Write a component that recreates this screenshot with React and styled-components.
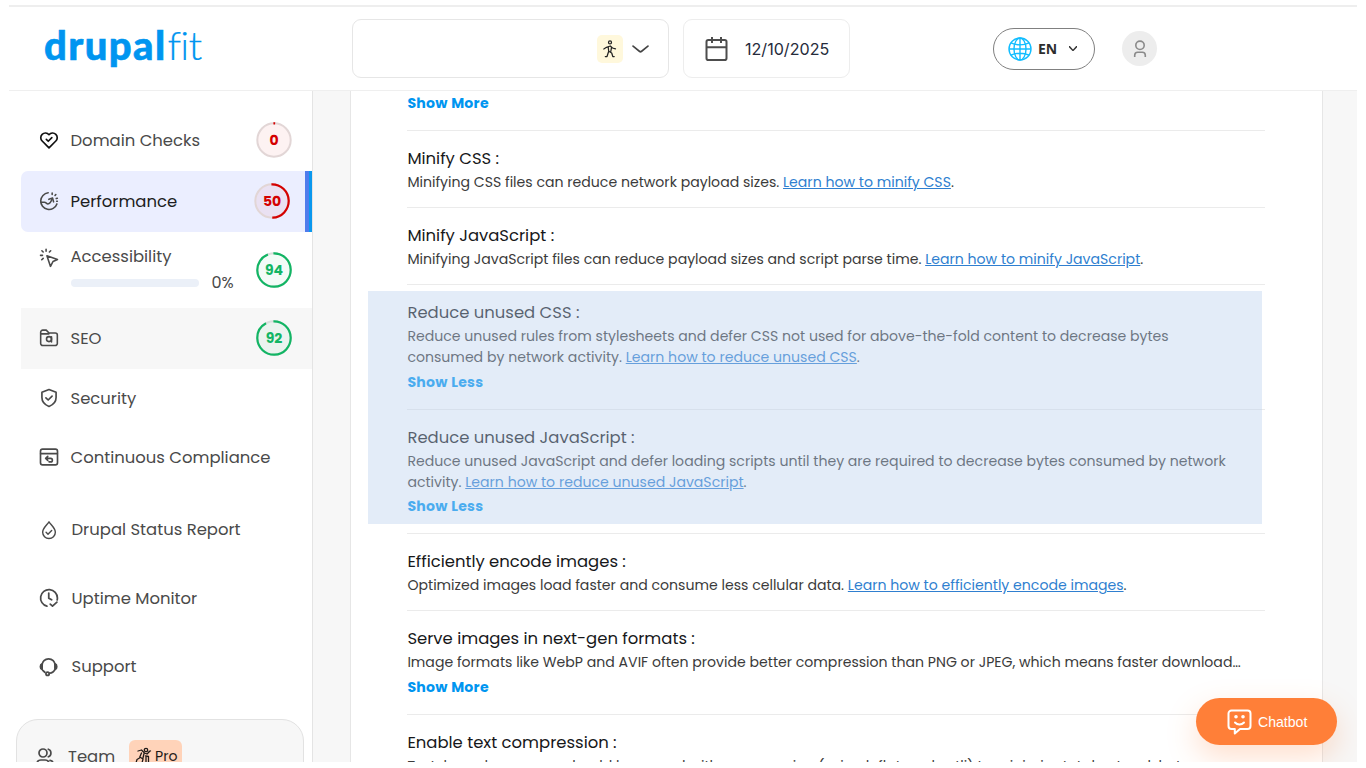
import React from "react";
import styled, { createGlobalStyle } from "styled-components";

const GlobalStyle = createGlobalStyle`
	* {
		box-sizing: border-box;
	}

	body {
		margin: 0;
		background-color: #ffffff;
		font-family: Poppins, Inter, "Open Sans", sans-serif;
	}
`;

const themeColor = {
	brand: "#0095f0",
	link: "#2f7fd0",
	text: "#4a4a4a",
	dark: "#17181a",
	line: "#ebebeb",
	muted: "#f7f7f7",
	red: "#d40000",
	green: "#12b564",
	orange: "#ff7f38",
};

const Page = styled.div`
	width: 1348px;
	height: 757px;
	margin: 5px 9px 6px;
	display: flex;
	flex-direction: column;
	overflow: hidden;
	border-top: 2px solid #eeeeee;
	position: relative;
`;

const Header = styled.header`
	height: 84px;
	flex: none;
	display: flex;
	align-items: center;
	border-bottom: 1px solid #efefef;
`;

const Logo = styled.div`
	width: 308px;
	margin-left: 35px;
	padding-bottom: 7px;
	font-family: Lato, sans-serif;
	font-size: 40px;
	line-height: 48px;
	font-weight: 900;
	letter-spacing: 1.4px;
	color: ${themeColor.brand};
	-webkit-text-stroke: 0.6px ${themeColor.brand};
	white-space: nowrap;

	span {
		font-weight: 300;
		letter-spacing: -0.8px;
		margin-left: 1px;
		-webkit-text-stroke: 0.2px ${themeColor.brand};
	}
`;

const Field = styled.div`
	width: ${({ width }) => width}px;
	height: 59px;
	border: 1px solid #e6e6e6;
	border-radius: 9px;
	display: flex;
	align-items: center;
`;

const SiteField = styled(Field)`
	justify-content: flex-end;
	padding-right: 19px;
	gap: 9px;
`;

const DateField = styled(Field)`
	margin-left: 14px;
	padding-left: 21px;
	gap: 17px;
	font-family: Inter, sans-serif;
	font-size: 16.1px;
	color: #262b3b;
	border-color: #ededed;
`;

const WalkBadge = styled.div`
	width: 26px;
	height: 28px;
	border-radius: 5px;
	background-color: #fff8dc;
	display: flex;
	align-items: center;
	justify-content: center;
`;

const Language = styled.button`
	width: 102px;
	height: 42px;
	margin-left: 143px;
	padding: 0 0 0 14px;
	border: 1px solid #808080;
	border-radius: 21px;
	background: none;
	display: flex;
	align-items: center;
	font-family: "Open Sans", sans-serif;
	font-size: 14px;
	font-weight: 700;
	color: #2d2d2d;

	span {
		width: 31px;
		margin-left: 6px;
		text-align: left;
	}
`;

const Avatar = styled.div`
	width: 35px;
	height: 35px;
	margin-left: 27px;
	border-radius: 50%;
	background-color: #ededed;
	display: flex;
	align-items: center;
	justify-content: center;
`;

const Body = styled.div`
	flex: 1;
	min-height: 0;
	display: flex;
`;

const Sidebar = styled.nav`
	width: 304px;
	flex: none;
	padding-top: 19px;
	border-right: 1px solid #e4e4e4;
	overflow: hidden;
	display: flex;
	flex-direction: column;
`;

const MenuItem = styled.div`
	height: ${({ height }) => height}px;
	flex: none;
	margin-left: 12px;
	padding: 0 20px 0 19px;
	display: flex;
	align-items: center;
	background-color: ${({ $state }) => $state === "hover" ? "#f7f7f7" : "transparent"};

	${({ $state }) => $state === "active" && `
		background-color: #ebeeff;
		border-radius: 7px 0 0 7px;
		padding-right: 0;
	`}

	> svg {
		margin-bottom: 1px;
	}
`;

const MenuIcon = styled.div`
	width: 18px;
	height: 20px;
	margin-right: ${({ $wide }) => $wide ? 13.5 : 12.5}px;
	margin-bottom: ${({ $raised }) => $raised ? 24 : 1}px;
	display: flex;
	align-items: center;
	justify-content: center;
	color: ${({ $dark }) => $dark ? "#111111" : themeColor.text};

	svg {
		flex: none;
	}
`;

const MenuLabel = styled.div`
	flex: 1;
	font-size: 16.45px;
	line-height: 24px;
	white-space: nowrap;
	color: ${({ $active }) => $active ? "#1d1d22" : themeColor.text};
`;

const ActiveBar = styled.div`
	width: 7px;
	height: 61px;
	margin-left: 15px;
	background-color: #4f7cec;
	border-right: 3px solid #0a98ee;
`;

const AccessBlock = styled.div`
	flex: 1;
	height: 52px;
	padding: 1px 0;
	display: flex;
	flex-direction: column;
	justify-content: space-between;
`;

const ProgressLine = styled.div`
	display: flex;
	align-items: center;
	gap: 13px;
	font-size: 16px;
	line-height: 24px;
	color: ${themeColor.text};
`;

const Track = styled.div`
	width: 128px;
	height: 8px;
	border-radius: 4px;
	background-color: #ebf0f8;
`;

const TeamBox = styled.div`
	width: 288px;
	height: 90px;
	flex: none;
	margin: 9px 0 0 7px;
	padding: 20px 0 0 19px;
	border: 1px solid #e2e2e2;
	border-radius: 22px;
	background-color: #f7f7f7;
	display: flex;
	align-items: flex-start;
	color: ${themeColor.text};

	> svg {
		margin-top: 7px;
	}
`;

const TeamName = styled.div`
	width: 61px;
	margin-left: 14px;
	font-size: 16.45px;
	line-height: 33px;
`;

const ProBadge = styled.div`
	width: 53px;
	height: 32px;
	padding-left: 6px;
	border-radius: 6px;
	background-color: #ffd3b9;
	display: flex;
	align-items: center;
	gap: 3px;
	font-size: 14.1px;
	color: #1f1a17;
`;

const Main = styled.main`
	flex: 1;
	background-color: ${themeColor.muted};
	padding: 0 34px 0 37px;
	overflow: hidden;
`;

const Card = styled.section`
	position: relative;
	width: 973px;
	height: 760px;
	padding-left: 56.4px;
	background-color: #ffffff;
	border: 1px solid #e6e6e6;
	border-width: 0 1px;
`;

const Audit = styled.article`
	width: 858px;
	padding: ${({ $first }) => $first ? "1.3px" : "15px"} 0 13.9px;
	border-bottom: 1px solid ${themeColor.line};
`;

const AuditTitle = styled.h3`
	margin: 0;
	font-size: 16.45px;
	font-weight: 400;
	line-height: 26px;
	white-space: nowrap;
	color: ${themeColor.dark};
`;

const AuditText = styled.p`
	margin: 0;
	font-size: 14.1px;
	line-height: 21px;
	white-space: nowrap;
	color: #3b3b3b;
`;

const Link = styled.a`
	color: ${themeColor.link};
	text-decoration: underline;
`;

const Toggle = styled.div`
	padding: ${({ $flush }) => $flush ? "1px 0 2px" : "3.8px 0 2px"};
	font-size: 14.1px;
	font-weight: 700;
	line-height: 21px;
	letter-spacing: 0.28px;
	color: ${themeColor.brand};
`;

// Tint laid over the two audits that are being pointed out
const Highlight = styled.div`
	position: absolute;
	left: 17px;
	top: 200px;
	width: 894px;
	height: 233px;
	background-color: rgba(185, 208, 237, 0.4);
`;

const Chatbot = styled.button`
	position: absolute;
	right: 20px;
	bottom: 17px;
	width: 141px;
	height: 47px;
	padding: 0 0 0 31px;
	border: none;
	border-radius: 24px;
	background-color: ${themeColor.orange};
	box-shadow: 0 12px 30px rgba(255, 127, 56, 0.25);
	display: flex;
	align-items: center;
	gap: 6px;
	font-family: "Liberation Sans", Arial, sans-serif;
	font-size: 14.1px;
	color: #ffffff;
`;

const Svg = ({ size = 20, stroke = 1.8, children }) =>
	<svg
		width={size}
		height={size}
		viewBox="0 0 24 24"
		fill="none"
		stroke="currentColor"
		strokeWidth={stroke}
		strokeLinecap="round"
		strokeLinejoin="round"
	>
		{children}
	</svg>;

const icons = {
	heart: (
		<Svg stroke={2}>
			<path d="M12 21.5 3.8 13.2a5.6 5.6 0 0 1 0-8 5.6 5.6 0 0 1 8.2.4 5.6 5.6 0 0 1 8.2-.4 5.6 5.6 0 0 1 0 8Z" />
			<path d="m8.8 11.3 2.3 2.2 4.3-4.3" />
		</Svg>
	),
	gauge: (
		<Svg stroke={1.9}>
			<path d="M11 2.2A10 10 0 1 0 21.5 15.5" />
			<path d="M2.3 13.5h4.2c2 0 2.5 2 4.2 2 2.6 0 4.2-3.6 5.3-6.500" />
			<path d="m11.8 10 4.5-1.5 1.2 4.5" />
			<path d="M15.8 2.5v1.7M20.2 4.2l-1 1.2M22 8.7l-1.3.4M22 12.3h-.8" />
		</Svg>
	),
	click: (
		<Svg stroke={1.9}>
			<path d="m9.5 9.3 12.7 4.4-5.4 2.5-3 5.9Z" />
			<path d="M8.5 1.5v2.4M1.8 8.8h2.4M3.5 3.3l1.5 1.5M14 3.3l-1.5 1.5M5 12.4l-1.7 1.7" />
		</Svg>
	),
	folder: (
		<Svg stroke={1.9}>
			<path d="M2 7V5a2.5 2.5 0 0 1 2.5-2.5h4.2L12 6h7.5A2.5 2.5 0 0 1 22 8.5v10a2.5 2.5 0 0 1-2.5 2.5h-15A2.5 2.5 0 0 1 2 18.5V7h10" />
			<circle cx="12" cy="13.3" r="3" />
			<path d="M15 10.5v6.2" />
		</Svg>
	),
	shield: (
		<Svg stroke={2}>
			<path d="m12 1.8 8.5 3.4v6.3c0 5-3.5 8.7-8.5 10.7-5-2-8.5-5.7-8.5-10.7V5.2Z" />
			<path d="m8.3 11.8 2.7 2.6 4.7-4.7" />
		</Svg>
	),
	compliance: (
		<Svg stroke={2}>
			<rect x="1.8" y="2.5" width="20.4" height="19" rx="2.5" />
			<path d="M2 8h20M10.5 11.3 8 13.7l2.5 2.4M8.3 13.7h5.7a2 2 0 0 1 0 4.1h-2" />
		</Svg>
	),
	drop: (
		<Svg stroke={1.7}>
			<path d="M12 2.2C9.5 6 4.4 9.7 4.4 14.6a7.6 7.6 0 0 0 15.2 0C19.6 9.7 14.5 6 12 2.2Z" />
			<path d="m8.5 14.8 2.3 2.2 4.4-4.4" />
		</Svg>
	),
	uptime: (
		<Svg stroke={2.1}>
			<path d="M9.5 21.8A10.1 10.1 0 1 1 22.1 12c0 .8-.1 1.5-.3 2.3" />
			<path d="M11.7 6v6.2l3.5 2M13.5 19.3l2.7 2.4 5.3-4.7" />
		</Svg>
	),
	support: (
		<Svg stroke={2.1}>
			<path d="M2.7 14.5V10a7.8 7.8 0 0 1 15.6 0v4.5c-1.3 3.2-3.8 4.6-6.8 5" transform="translate(1 0)" />
			<path d="M3.7 8.300C2.200 8.800 1.700 10 1.700 11.600s.5 2.900 2 3.400ZM19.300 8.300c1.500.5 2 1.700 2 3.300s-.5 2.900-2 3.400Z" />
			<path d="M4.500 16 7 18.300" />
			<circle cx="10.3" cy="20" r="2" />
		</Svg>
	),
};

const WalkIcon = () =>
	<svg width="16" height="20" viewBox="0 0 16 20" fill="none" stroke="#222222" strokeWidth="1.25" strokeLinecap="round" strokeLinejoin="round">
		<circle cx="8" cy="3.4" r="1.5" />
		<path d="M13.5 9.8 10.5 9 8.3 7l-3.8 1.3L1.8 10M6.200 8l.5 4.300L5 17.500H3.300M6.700 12.300l3 1.700 1.100 3.500h1.400M9.500 8.700l-.8 4.300" />
	</svg>;

const Chevron = ({ width, height, stroke, color }) =>
	<svg width={width} height={height} viewBox="0 0 16 7" fill="none" preserveAspectRatio="none">
		<path d="M1 1 7.2 5.7q.8.5 1.6 0L15 1" stroke={color} strokeWidth={stroke} strokeLinecap="round" />
	</svg>;

const CalendarIcon = () =>
	<svg width="23" height="26" viewBox="0 0 23 26" fill="none" stroke="#4d4d4d" strokeWidth="2">
		<rect x="1.5" y="4" width="20" height="20" rx="1.8" />
		<path d="M1.5 11.3h20M7 1v6M16 1v6" />
	</svg>;

const GlobeIcon = () =>
	<svg width="24" height="24" viewBox="0 0 24 24" fill="none" stroke="#12bdff" strokeWidth="1.4">
		<circle cx="12" cy="12" r="11" />
		<ellipse cx="12" cy="12" rx="6" ry="11" />
		<path d="M12 1v22M1 12h22M3 5.8c5 2.7 13 2.7 18 0M3 18.2c5-2.7 13-2.7 18 0" />
	</svg>;

const UserIcon = () =>
	<svg width="14" height="18" viewBox="0 0 14 18" fill="none" stroke="#8a8a8a" strokeWidth="1.6">
		<circle cx="7" cy="5.3" r="4.2" />
		<path d="M1.7 17v-1.8c0-2 1.3-3 3-3h4.6c1.7 0 3 1 3 3V17" />
	</svg>;

const TeamIcon = () =>
	<svg width="18" height="20" viewBox="0 0 18 20" fill="none" stroke="currentColor" strokeWidth="1.7" strokeLinecap="round">
		<circle cx="7" cy="6" r="4" />
		<path d="M1 18v-1c0-2.5 1.5-4 4-4h4c2.5 0 4 1.5 4 4v1M12.3 2.2c3.5 1 3.5 6.5 0 7.6M14 13.3c2 .3 3.2 1.7 3.2 3.7v1" />
	</svg>;

const ProIcon = () =>
	<svg width="17" height="18" viewBox="0 0 17 18" fill="none" stroke="#1f1a17" strokeWidth="1.3" strokeLinecap="round" strokeLinejoin="round">
		<circle cx="11" cy="3" r="1.7" />
		<path d="m3 4 3.5-1 3 3 2.5 1L15 4M6.5 6 4.8 10 8 12l-1 4M9 6.500 8 11M4.500 11 2 12.500 1 16M10.500 9l3 .5V16M11 10v6M1 16h3M14 4.500l1.500-.5" />
	</svg>;

const ChatIcon = () =>
	<svg width="25" height="26" viewBox="0 0 25 26" fill="none" stroke="#ffffff" strokeWidth="2" strokeLinecap="round" strokeLinejoin="round">
		<path d="M4.5 1.5h16a3 3 0 0 1 3 3v12.5a3 3 0 0 1-3 3H13L7.8 24.5V20H4.5a3 3 0 0 1-3-3V4.5a3 3 0 0 1 3-3Z" />
		<path d="M8 13.5c2.5 2.7 6.5 2.7 9 0" />
		<circle cx="9" cy="7.8" r=".8" fill="#ffffff" />
		<circle cx="16" cy="7.8" r=".8" fill="#ffffff" />
	</svg>;

function ScoreRing({ value, good }) {
	const color = good ? themeColor.green : themeColor.red;
	const length = 2 * Math.PI * 16.7;

	return (
		<svg width="36" height="36" viewBox="0 0 36 36">
			<circle
				cx="18"
				cy="18"
				r="16.7"
				fill={color}
				fillOpacity="0.05"
				stroke={good ? "#dadfdc" : "#e2d6d6"}
				strokeWidth="2"
			/>
			<circle
				cx="18"
				cy="18"
				r="16.7"
				fill="none"
				stroke={color}
				strokeWidth="2.2"
				strokeDasharray={`${Math.max(length * value / 100, 1.8)} ${length}`}
				transform="rotate(-92 18 18)"
			/>
			<text x="18" y="22.6" textAnchor="middle" fontSize="14" fontWeight="700" fill={color}>{value}</text>
		</svg>
	);
}

const menu = [
	{ name: "Domain Checks", icon: "heart", height: 61, score: 0, dark: true },
	{ name: "Performance", icon: "gauge", height: 61, score: 50, state: "active" },
	{ name: "Accessibility", icon: "click", height: 76, score: 94, good: true, progress: "0%" },
	{ name: "SEO", icon: "folder", height: 61, score: 92, good: true, state: "hover" },
	{ name: "Security", icon: "shield", height: 59 },
	{ name: "Continuous Compliance", icon: "compliance", height: 59 },
	{ name: "Drupal Status Report", icon: "drop", height: 86, wide: true },
	{ name: "Uptime Monitor", icon: "uptime", height: 51, wide: true },
	{ name: "Support", icon: "support", height: 86, wide: true },
];

const audits = [
	{
		title: "Minify CSS :",
		lines: ["Minifying CSS files can reduce network payload sizes. "],
		link: "Learn how to minify CSS",
	},
	{
		title: "Minify JavaScript :",
		lines: ["Minifying JavaScript files can reduce payload sizes and script parse time. "],
		link: "Learn how to minify JavaScript",
	},
	{
		title: "Reduce unused CSS :",
		lines: [
			"Reduce unused rules from stylesheets and defer CSS not used for above-the-fold content to decrease bytes",
			"consumed by network activity. ",
		],
		link: "Learn how to reduce unused CSS",
		toggle: "Show Less",
	},
	{
		title: "Reduce unused JavaScript :",
		lines: [
			"Reduce unused JavaScript and defer loading scripts until they are required to decrease bytes consumed by network",
			"activity. ",
		],
		link: "Learn how to reduce unused JavaScript",
		toggle: "Show Less",
	},
	{
		title: "Efficiently encode images :",
		lines: ["Optimized images load faster and consume less cellular data. "],
		link: "Learn how to efficiently encode images",
	},
	{
		title: "Serve images in next-gen formats :",
		lines: ["Image formats like WebP and AVIF often provide better compression than PNG or JPEG, which means faster download…"],
		toggle: "Show More",
	},
	{
		title: "Enable text compression :",
		lines: ["Text-based resources should be served with compression (gzip, deflate or brotli) to minimize total network bytes."],
	},
];

function MenuRow({ item }) {
	const label = <MenuLabel $active={item.state === "active"}>{item.name}</MenuLabel>;

	return (
		<MenuItem height={item.height} $state={item.state}>
			<MenuIcon $wide={item.wide} $dark={item.dark} $raised={!!item.progress}>
				{icons[item.icon]}
			</MenuIcon>
			{item.progress
				? <AccessBlock>
					{label}
					<ProgressLine><Track />{item.progress}</ProgressLine>
				</AccessBlock>
				: label}
			{item.score !== undefined && <ScoreRing value={item.score} good={item.good} />}
			{item.state === "active" && <ActiveBar />}
		</MenuItem>
	);
}

function AuditItem({ audit }) {
	return (
		<Audit>
			<AuditTitle>{audit.title}</AuditTitle>
			{audit.lines.map((line, index) =>
				<AuditText key={line}>
					{line}
					{audit.link && index === audit.lines.length - 1 &&
						<><Link>{audit.link}</Link>.</>}
				</AuditText>
			)}
			{audit.toggle && <Toggle>{audit.toggle}</Toggle>}
		</Audit>
	);
}

export default function App() {
	return (
		<>
			<GlobalStyle />
			<Page>
				<Header>
					<Logo>drupal<span>fit</span></Logo>
					<SiteField width={317}>
						<WalkBadge><WalkIcon /></WalkBadge>
						<Chevron width={17} height={8} stroke={1.6} color="#444444" />
					</SiteField>
					<DateField width={167}>
						<CalendarIcon />
						12/10/2025
					</DateField>
					<Language>
						<GlobeIcon />
						<span>EN</span>
						<Chevron width={8} height={5} stroke={2.4} color="#333333" />
					</Language>
					<Avatar><UserIcon /></Avatar>
				</Header>
				<Body>
					<Sidebar>
						{menu.map(item => <MenuRow key={item.name} item={item} />)}
						<TeamBox>
							<TeamIcon />
							<TeamName>Team</TeamName>
							<ProBadge><ProIcon />Pro</ProBadge>
						</TeamBox>
					</Sidebar>
					<Main>
						<Card>
							<Audit $first>
								<Toggle $flush>Show More</Toggle>
							</Audit>
							{audits.map(audit => <AuditItem key={audit.title} audit={audit} />)}
							<Highlight />
						</Card>
					</Main>
				</Body>
				<Chatbot><ChatIcon />Chatbot</Chatbot>
			</Page>
		</>
	);
}
